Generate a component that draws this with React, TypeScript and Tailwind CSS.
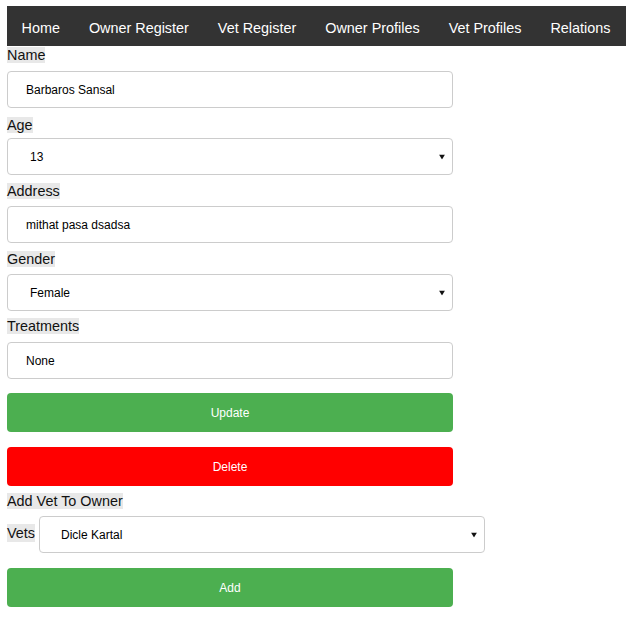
const links = ["Home", "Owner Register", "Vet Register", "Owner Profiles", "Vet Profiles", "Relations"]

function Label({ children, className = "" }: { children: React.ReactNode; className?: string }) {
  return (
    <span className={`block w-fit bg-[#e8e8e8] text-[14.4px] leading-[16px] text-[#111] ${className}`}>
      {children}
    </span>
  )
}

function Arrow() {
  return (
    <svg width="6" height="5" viewBox="0 0 6 5" className="absolute right-[7px] top-1/2 -translate-y-1/2" aria-hidden="true">
      <polygon points="0,0 6,0 3,5" fill="#111" />
    </svg>
  )
}

function Field({ value, className = "" }: { value: string; className?: string }) {
  return (
    <div
      className={`flex h-[37px] w-[446px] items-center rounded-[4px] border border-[#cccccc] bg-white pl-[18px] text-[12px] text-black ${className}`}
    >
      {value}
    </div>
  )
}

function Select({ value, className = "", width = "w-[446px]", pad = "pl-[22px]" }: { value: string; className?: string; width?: string; pad?: string }) {
  return (
    <div
      className={`relative flex h-[37px] ${width} items-center rounded-[4px] border border-[#cccccc] bg-white ${pad} text-[12px] text-black ${className}`}
    >
      {value}
      <Arrow />
    </div>
  )
}

function Button({ children, color, className = "" }: { children: React.ReactNode; color: string; className?: string }) {
  return (
    <button className={`flex h-[39px] w-[446px] items-center justify-center rounded-[4px] text-[12px] text-white ${color} ${className}`}>
      {children}
    </button>
  )
}

export default function App() {
  return (
    <div className="min-h-[623px] bg-white pl-[7px] pt-[6px] font-['Liberation_Sans',Arial,sans-serif]">
      {/* top navigation */}
      <nav className="flex h-[40px] items-center overflow-hidden bg-[#333333]">
        {links.map((l) => (
          <a key={l} className="whitespace-nowrap px-[14.5px] pt-[5px] text-[14.4px] text-white">
            {l}
          </a>
        ))}
      </nav>

      <div className="flex flex-col">
        <Label className="mt-[1px]">Name</Label>
        <Field value="Barbaros Sansal" className="mt-[8px]" />

        <Label className="mt-[9px]">Age</Label>
        <Select value="13" className="mt-[5px]" />

        <Label className="mt-[8px]">Address</Label>
        <Field value="mithat pasa dsadsa" className="mt-[7px]" />

        <Label className="mt-[8px]">Gender</Label>
        <Select value="Female" className="mt-[7px]" />

        <Label className="mt-[7px]">Treatments</Label>
        <Field value="None" className="mt-[8px]" />

        <Button color="bg-[#4caf50]" className="mt-[14px]">Update</Button>
        <Button color="bg-[#ff0000]" className="mt-[15px]">Delete</Button>

        <Label className="mt-[7px]">Add Vet To Owner</Label>
        <div className="mt-[7px] flex items-center gap-[4px]">
          <Label className="mt-[-3px] leading-[18px]">Vets</Label>
          <Select value="Dicle Kartal" pad="pl-[21px]" />
        </div>

        <Button color="bg-[#4caf50]" className="mt-[15px]">Add</Button>
      </div>
    </div>
  )
}
